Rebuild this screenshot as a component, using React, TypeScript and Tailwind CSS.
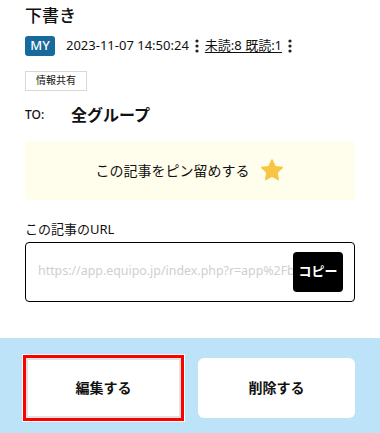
import React from "react";

const font = { fontFamily: '"Noto Sans", "Noto Sans CJK JP", sans-serif' };

function Dots() {
  return (
    <svg width="4" height="14" viewBox="0 0 4 14" className="mx-[6px] shrink-0">
      <circle cx="2" cy="2" r="1.6" fill="#222" />
      <circle cx="2" cy="7" r="1.6" fill="#222" />
      <circle cx="2" cy="12" r="1.6" fill="#222" />
    </svg>
  );
}

function Star() {
  return (
    <svg width="26" height="25" viewBox="0 0 24 24">
      <path
        d="M12 1.8l3.05 6.4 7 .9-5.15 4.85 1.3 6.95L12 17.5l-6.2 3.4 1.3-6.95L1.95 9.1l7-.9z"
        fill="#f7c644"
        stroke="#f7c644"
        strokeWidth="1.2"
        strokeLinejoin="round"
      />
    </svg>
  );
}

export default function App() {
  return (
    <div className="w-[380px] h-[433px] bg-white flex flex-col text-[#111]" style={font}>
      <div className="flex-1 px-[25px] pt-[4px]">
        <h1 className="text-[17px] font-medium leading-[24px]">下書き</h1>

        <div className="flex items-center mt-[8px] h-[20px]">
          <span className="w-[30px] h-[20px] rounded-[3px] bg-[#18699c] text-white text-[13px] font-medium flex items-center justify-center">
            MY
          </span>
          <span className="ml-[11px] text-[13px]">2023-11-07 14:50:24</span>
          <Dots />
          <a className="text-[13px] underline underline-offset-[2px]">未読:8 既読:1</a>
          <Dots />
        </div>

        <div className="mt-[10px]">
          <span className="inline-flex items-center justify-center w-[62px] h-[20px] border border-[#d8d8d8] text-[10px]">
            情報共有
          </span>
        </div>

        <div className="flex items-center mt-[12px] h-[24px]">
          <span className="w-[46px] text-[12px] font-medium">TO:</span>
          <span className="text-[16px] font-bold">全グループ</span>
        </div>

        <button className="mt-[14px] w-full h-[59px] rounded-[4px] bg-[#fffeec] flex items-center justify-center gap-[9px] text-[14px]">
          <span>この記事をピン留めする</span>
          <Star />
        </button>

        <div className="mt-[20px] text-[13px] leading-[18px]">この記事のURL</div>

        <div className="mt-[4px] h-[60px] border border-black rounded-[4px] flex items-center pl-[12px] pr-[11px]">
          <div className="flex-1 min-w-0 overflow-hidden whitespace-nowrap text-[12.4px] text-[#cfcfcf]">
            https://app.equipo.jp/index.php?r=app%2Fboard%2Fview
          </div>
          <button className="w-[50px] h-[40px] rounded-[4px] bg-black text-white text-[13px] font-bold shrink-0">
            コピー
          </button>
        </div>
      </div>

      <div className="h-[95px] bg-[#bde3f8] flex items-center gap-[17px] pl-[26px] pr-[25px] pt-[4px]">
        <button className="w-[155px] h-[60px] bg-white border-[2px] border-[#e2e2e2] outline outline-[3px] outline-[#ff0000] text-[14px] font-bold shadow-[0_0_0_4px_white]">
          編集する
        </button>
        <button className="flex-1 h-[60px] bg-white rounded-[6px] text-[14px] font-bold">削除する</button>
      </div>
    </div>
  );
}
